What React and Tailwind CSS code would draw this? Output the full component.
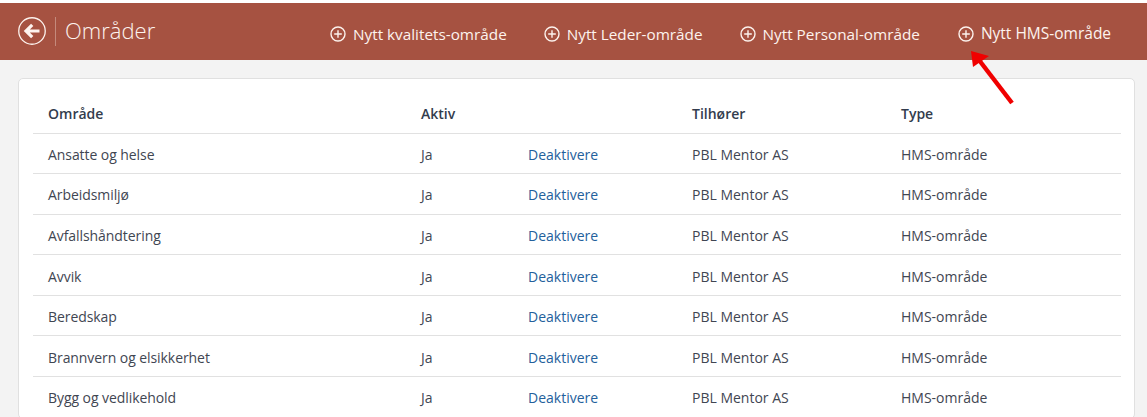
import React from "react";

const rows = ["Ansatte og helse","Arbeidsmiljø","Avfallshåndtering","Avvik","Beredskap","Brannvern og elsikkerhet","Bygg og vedlikehold"];
const actions = [
  { label: "Nytt kvalitets-område", size: "text-[15.3px]" },
  { label: "Nytt Leder-område", size: "text-[15.3px]" },
  { label: "Nytt Personal-område", size: "text-[15.3px]" },
  { label: "Nytt HMS-område", size: "ml-px text-[15.5px]" },
];

function Plus() {
  return (
    <svg width="16" height="16" viewBox="0 0 16 16" fill="none" stroke="currentColor" strokeWidth="1.4" className="shrink-0">
      <circle cx="8" cy="8" r="7" />
      <path d="M8 4.2v7.6M4.2 8h7.6" />
    </svg>
  );
}

export default function App() {
  return (
    <div className="relative h-[417px] w-[1147px] overflow-hidden bg-[#f3f3f3] pt-[3px] font-['Open_Sans',sans-serif]">
      <div className="absolute left-0 top-0 h-[3px] w-full bg-white" />
      <header className="flex h-[57px] items-center bg-[#a65241] pl-[18px] text-[#fdf3ee]">
        <svg width="28" height="28" viewBox="0 0 28 28" fill="none" stroke="currentColor" className="mb-[1px] shrink-0">
          <circle cx="14" cy="14" r="13.25" strokeWidth="1.3" />
          <path d="M21.5 14H9M14.2 7.8 8 14l6.2 6.2" strokeWidth="3.2" />
        </svg>
        <div className="ml-[9px] h-[29px] w-px bg-[#c48a7c]" />
        <h1 className="mb-[3px] ml-[9px] w-[89px] whitespace-nowrap text-[22px] font-light leading-none">Områder</h1>
        <nav className="ml-[176px] mt-[5px] flex items-center gap-[37px]">
          {actions.map((a) => (
            <span key={a.label} className={`flex items-center gap-[7px] whitespace-nowrap ${a.size}`}>
              <Plus />
              {a.label}
            </span>
          ))}
        </nav>
      </header>
      <main className="mx-[18px] mt-[18px] w-[1117px] rounded-[5px] border border-[#e0e0e0] bg-white px-[14px] pt-[15px]">
        <table className="w-[1088px] table-fixed border-collapse text-[14px] text-[#3f4652]">
          <thead>
            <tr className="h-[39px] border-b border-[#e1e1e1] text-left font-semibold text-[#323c4d]">
              <th className="w-[388px] pl-[15px] font-semibold">Område</th>
              <th className="w-[107px] font-semibold">Aktiv</th>
              <th className="w-[164px]" />
              <th className="w-[209px] font-semibold">Tilhører</th>
              <th className="font-semibold">Type</th>
            </tr>
          </thead>
          <tbody>
            {rows.map((r) => (
              <tr key={r} className="h-[40.6px] border-b border-[#e1e1e1]">
                <td className="pl-[15px] pt-[2px] tracking-[-0.07px]">{r}</td>
                <td className="pt-[2px]">Ja</td>
                <td className="pt-[2px] text-[#23609c]">Deaktivere</td>
                <td className="pt-[2px]">PBL Mentor AS</td>
                <td className="pt-[2px]">HMS-område</td>
              </tr>
            ))}
          </tbody>
        </table>
      </main>
      <svg className="absolute left-[968px] top-[49px]" width="50" height="58" viewBox="0 0 50 58" fill="none">
        <path d="M44 54 11 11" stroke="#f00000" strokeWidth="4.5" />
        <path d="M3 2 21 7 5 18Z" fill="#f00000" />
      </svg>
    </div>
  );
}
